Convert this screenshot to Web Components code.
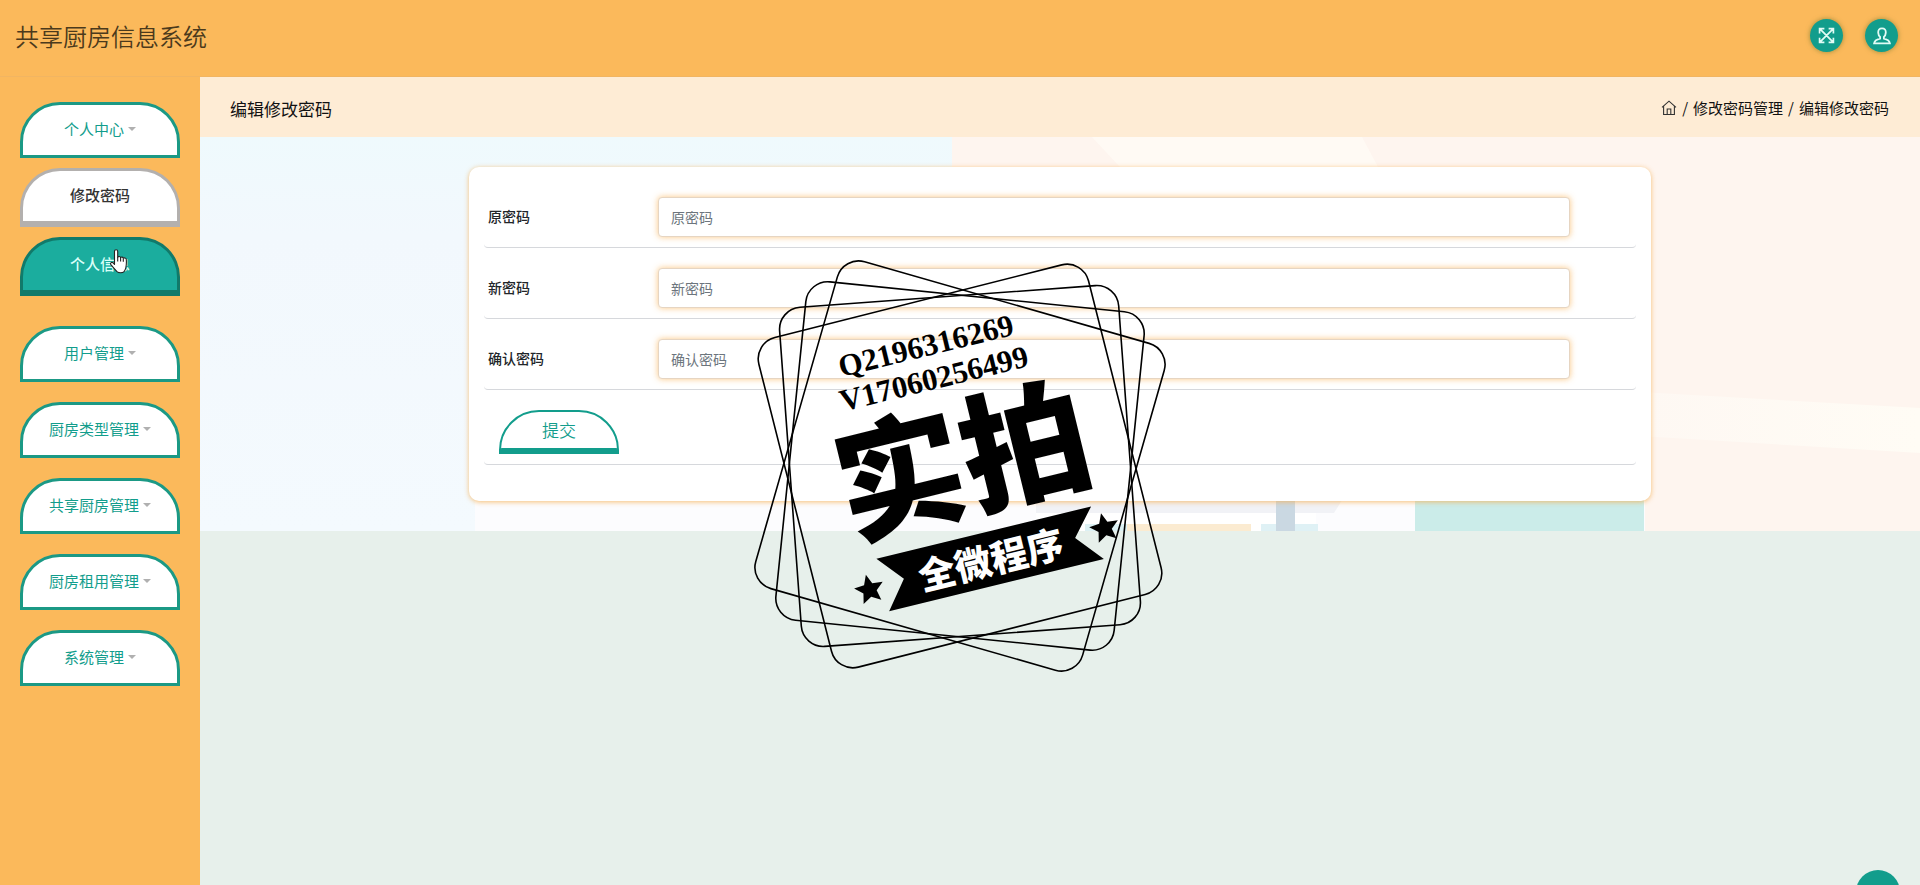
<!DOCTYPE html>
<html lang="zh-CN">
<head>
<meta charset="utf-8">
<title>共享厨房信息系统</title>
<style>
body {
  margin: 0;
  background: #e7f0eb;
  font-family: "Noto Sans CJK SC", "Noto Sans", sans-serif;
  --brand: #fbb95b;
  --teal: #129d8c;
}
</style>
</head>
<body>

<kitchen-app>
  <app-header slot="header" name="共享厨房信息系统">
    <round-button label="全屏">
      <svg viewBox="0 0 16 16" width="17" height="17" fill="none" stroke="#e2fbf5" stroke-width="1.600">
        <path d="M2 2 14 14M14 2 2 14M1.500 6V1.500H6M10 1.500h4.500V6M14.500 10v4.500H10M6 14.500H1.500V10"/>
      </svg>
    </round-button>
    <round-button label="用户">
      <svg viewBox="0 0 18 18" width="18" height="18" fill="none" stroke="#e2fbf5" stroke-width="1.800">
        <path d="M9 1.300C6.300 1.300 5 3 5.200 5.600c.1 1.900.8 3.300 1.900 4.300v1.700c-2.500.6-5.600 1.600-6 4.700h15.800c-.4-3.100-3.500-4.100-6-4.700V9.900c1.100-1 1.800-2.400 1.900-4.300C13 3 11.700 1.300 9 1.300z"/>
      </svg>
    </round-button>
  </app-header>

  <side-nav slot="nav">
    <nav-group label="个人中心" open>
      <nav-link>修改密码</nav-link>
      <nav-link active>个人信息</nav-link>
    </nav-group>
    <nav-group label="用户管理"></nav-group>
    <nav-group label="厨房类型管理"></nav-group>
    <nav-group label="共享厨房管理"></nav-group>
    <nav-group label="厨房租用管理"></nav-group>
    <nav-group label="系统管理"></nav-group>
  </side-nav>

  <page-heading label="编辑修改密码" parent="修改密码管理"></page-heading>

  <page-scene>
    <password-form>
      <form-field label="原密码"></form-field>
      <form-field label="新密码"></form-field>
      <form-field label="确认密码"></form-field>
    </password-form>
  </page-scene>
</kitchen-app>

<shop-stamp></shop-stamp>
<back-top></back-top>

<script>
/**
 * Creates a template element from a string.
 */
const html = (markup) => {
  const template = document.createElement('template')
  template.innerHTML = markup
  return template
}

/**
 * Base class that clones a template into an open shadow root.
 */
class ShadowElement extends HTMLElement {
  constructor () {
    super()
    this.attachShadow({ mode: 'open' })
      .appendChild(this.constructor.template.content.cloneNode(true))
  }

  /**
   * Writes an attribute's value into an element of the shadow root.
   */
  fill (selector, attribute) {
    this.shadowRoot.querySelector(selector).textContent = this.getAttribute(attribute)
  }
}

customElements.define('kitchen-app',
  class extends ShadowElement {
    static template = html(`
<style>
:host {
  display: grid;
  grid-template-columns: 200px 1fr;
  grid-template-rows: auto 1fr;
  min-height: 100vh;
}
header {
  grid-column: 1 / -1;
}
</style>
<header><slot name="header"></slot></header>
<slot name="nav"></slot>
<main><slot></slot></main>
`)
  }
)

customElements.define('app-header',
  class extends ShadowElement {
    static template = html(`
<style>
:host {
  display: flex;
  align-items: center;
  justify-content: space-between;
  box-sizing: border-box;
  height: 77px;
  padding: 0 22px 5px 15px;
  background: var(--brand);
  border-bottom: 1px solid #f1b562;
}
h1 {
  margin: 0;
  font-size: 24px;
  font-weight: 350;
  line-height: 36px;
  color: #4b3a1c;
}
div {
  display: flex;
  gap: 22px;
}
</style>
<h1></h1>
<div><slot></slot></div>
`)

    connectedCallback () {
      this.fill('h1', 'name')
    }
  }
)

customElements.define('round-button',
  class extends ShadowElement {
    static template = html(`
<style>
:host {
  display: block;
}
button {
  display: flex;
  align-items: center;
  justify-content: center;
  width: 33px;
  height: 33px;
  padding: 0;
  border: none;
  border-radius: 50%;
  background: var(--teal);
  box-shadow: 0 0 5px rgba(90, 110, 40, .6);
  cursor: pointer;
}
</style>
<button type="button"><slot></slot></button>
`)

    connectedCallback () {
      this.shadowRoot.querySelector('button').setAttribute('aria-label', this.getAttribute('label'))
    }
  }
)

customElements.define('side-nav',
  class extends ShadowElement {
    static template = html(`
<style>
:host {
  display: block;
  background: var(--brand);
}
nav {
  display: flex;
  flex-direction: column;
  gap: 20px;
  padding: 25px 20px;
}
</style>
<nav><slot></slot></nav>
`)
  }
)

customElements.define('nav-group',
  class extends ShadowElement {
    static template = html(`
<style>
:host {
  display: block;
}
button {
  display: flex;
  align-items: center;
  justify-content: center;
  gap: 4px;
  box-sizing: border-box;
  width: 100%;
  height: 56px;
  padding: 0 0 2px;
  border: 3px solid #1b9985;
  border-radius: 40px 40px 0 0;
  background: #fff;
  color: var(--teal);
  font: 15px/22px "Noto Sans CJK SC", sans-serif;
  cursor: pointer;
}
i {
  border: 4px solid transparent;
  border-top-color: #b0b0b0;
  border-bottom: none;
}
div {
  display: none;
}
:host([open]) div {
  display: grid;
  gap: 10px;
  padding: 10px 0;
}
</style>
<button type="button"><span></span><i></i></button>
<div><slot></slot></div>
`)

    connectedCallback () {
      this.fill('span', 'label')
      this.shadowRoot.querySelector('button').addEventListener('click', () => {
        this.toggleAttribute('open')
      })
    }
  }
)

customElements.define('nav-link',
  class extends ShadowElement {
    static template = html(`
<style>
:host {
  display: block;
  position: relative;
}
a {
  display: flex;
  align-items: center;
  justify-content: center;
  box-sizing: border-box;
  height: 59px;
  padding-bottom: 2px;
  border: 3px solid #b3b0ae;
  border-bottom-width: 6px;
  border-radius: 40px 40px 0 0;
  background: #fff;
  color: #333;
  font-size: 15px;
  font-weight: 500;
  line-height: 22px;
  text-decoration: none;
}
:host([active]) a {
  border-color: #117a6a;
  background: #1bad9e;
  color: #d9fff8;
}
svg {
  display: none;
}
:host([active]) svg {
  display: block;
  position: absolute;
  left: 90px;
  top: 12px;
}
</style>
<a href="#"><slot></slot></a>
<svg width="18" height="25" viewBox="0 0 18 25" fill="#fff" stroke="#222" stroke-width="1.100" stroke-linejoin="round">
  <path d="M4.500 15.500V2.500c0-2.400 3.200-2.400 3.200 0v5.800c.6-1.300 2.700-1.100 2.900.4.700-1 2.600-.8 2.700.6.900-.8 2.900-.6 3 1.200.3 4.600.4 9-2.300 12.100-1.500 1.500-5.300 1.400-7 0C5 20.600 2.600 17.700.9 15.600c-1-1.700.8-3 2.200-1.700z"/>
  <path d="M7.700 8v4.500M10.600 8.800v3.700M13.300 9.500v3.300" fill="none"/>
</svg>
`)
  }
)

customElements.define('page-heading',
  class extends ShadowElement {
    static template = html(`
<style>
:host {
  display: flex;
  align-items: center;
  justify-content: space-between;
  height: 60px;
  padding: 0 31px 0 30px;
  background: #feecd5;
  color: #111;
}
h2 {
  margin: 0;
  padding-top: 4px;
  font-size: 17px;
  font-weight: 400;
  line-height: 24px;
}
nav {
  display: flex;
  align-items: center;
  gap: 5px;
  padding-top: 2px;
  font-size: 15px;
  line-height: 22px;
}
a {
  display: flex;
  color: inherit;
  text-decoration: none;
}
</style>
<h2></h2>
<nav>
  <a href="#" aria-label="首页">
    <svg width="16" height="16" viewBox="0 0 16 16" fill="none" stroke="#333" stroke-width="1.100">
      <path d="M1 7.300 8 1.200l7 6.100M2.600 6.200v8.300h10.800V6.200M6.200 14.500V9h3.600v5.500"/>
    </svg>
  </a>
  <span>/</span>
  <a href="#" class="parent"></a>
  <span>/</span>
  <span class="current"></span>
</nav>
`)

    connectedCallback () {
      this.fill('h2', 'label')
      this.fill('.parent', 'parent')
      this.fill('.current', 'label')
    }
  }
)

customElements.define('page-scene',
  class extends ShadowElement {
    static template = html(`
<style>
:host {
  display: block;
  position: relative;
  padding: 30px;
}
svg {
  position: absolute;
  inset: 0;
  width: 100%;
  height: 100%;
}
div {
  position: relative;
}
</style>
<svg viewBox="0 0 1720 394" preserveAspectRatio="none" aria-hidden="true">
  <defs>
    <linearGradient id="sky" x1="0" y1="0" x2="0" y2="1">
      <stop offset="0" stop-color="#effafd"/>
      <stop offset=".25" stop-color="#f2f8fd"/>
      <stop offset="1" stop-color="#f4fafe"/>
    </linearGradient>
    <linearGradient id="beam">
      <stop offset="0" stop-color="#fef8f3"/>
      <stop offset="1" stop-color="#fffcf5"/>
    </linearGradient>
  </defs>
  <rect width="752" height="394" fill="url(#sky)"/>
  <rect x="752" width="968" height="394" fill="#fef5ef"/>
  <path d="M892 0h270l16 30H920z" fill="#fffaf4"/>
  <path d="M1440 255 1720 271v45l-280-17z" fill="url(#beam)"/>
  <rect x="275" y="350" width="1170" height="44" fill="#fcfcfe"/>
  <path d="M836 360h308l-10 16H836z" fill="#f1f2f6"/>
  <rect x="836" y="376" width="280" height="18" fill="#fff"/>
  <rect x="885" y="387" width="42" height="7" fill="#dcf1f4"/>
  <rect x="927" y="387" width="124" height="7" fill="#fbebd1"/>
  <rect x="1061" y="387" width="57" height="7" fill="#dff1f5"/>
  <rect x="1076" y="360" width="19" height="34" fill="#cad8e2"/>
  <rect x="1215" y="350" width="229" height="44" fill="#cbece9"/>
</svg>
<div><slot></slot></div>
`)
  }
)

customElements.define('password-form',
  class extends ShadowElement {
    static template = html(`
<style>
:host {
  display: block;
}
form {
  box-sizing: border-box;
  max-width: 1182px;
  margin: 0 auto;
  padding: 10px 15px 36px;
  border-radius: 10px;
  background: #fff;
  box-shadow: 0 1px 5px rgba(245, 175, 80, .8);
}
div {
  padding: 20px 15px 10px;
  border-bottom: 1px solid #d6d8dc;
  border-radius: 4px;
}
button {
  display: block;
  width: 120px;
  height: 44px;
  padding: 0 0 4px;
  border: 2px solid var(--teal);
  border-radius: 40px 40px 0 0;
  background: #fff;
  box-shadow: inset 0 -4px var(--teal);
  color: var(--teal);
  font: 17px/24px "Noto Sans CJK SC", sans-serif;
  font-weight: 350;
  cursor: pointer;
}
</style>
<form>
  <slot></slot>
  <div><button type="submit">提交</button></div>
</form>
`)

    connectedCallback () {
      this.shadowRoot.querySelector('form').addEventListener('submit', (event) => {
        event.preventDefault()
      })
    }
  }
)

customElements.define('form-field',
  class extends ShadowElement {
    static template = html(`
<style>
:host {
  display: grid;
  grid-template-columns: 170px 1fr;
  align-items: center;
  padding: 20px 66px 10px 4px;
  border-bottom: 1px solid #d6d8dc;
  border-radius: 4px;
}
label {
  padding-bottom: 2px;
  font-size: 14px;
  font-weight: 500;
  line-height: 20px;
  color: #212529;
}
input {
  box-sizing: border-box;
  width: 100%;
  height: 40px;
  padding: 0 12px;
  border: 1px solid #e6d5c2;
  border-radius: 4px;
  background: #fff;
  box-shadow: 0 0 6px rgba(250, 185, 100, .8);
  font: 14px/20px "Noto Sans CJK SC", sans-serif;
}
input::placeholder {
  color: #6c757d;
}
</style>
<label for="value"></label>
<input type="password" id="value">
`)

    connectedCallback () {
      this.fill('label', 'label')
      this.shadowRoot.querySelector('input').placeholder = this.getAttribute('label')
    }
  }
)

customElements.define('shop-stamp',
  class extends ShadowElement {
    static template = html(`
<style>
:host {
  position: absolute;
  top: 240px;
  left: calc(50% - 220px);
  pointer-events: none;
}
svg {
  display: block;
}
.contact {
  font: bold 31px "Liberation Serif", serif;
}
.big {
  font: 900 128px "Noto Sans CJK SC", sans-serif;
}
.ribbon {
  font: 900 37px "Noto Sans CJK SC", sans-serif;
  fill: #fff;
}
</style>
<svg width="440" height="440" viewBox="0 0 440 440">
  <g transform="translate(220 226)" fill="none" stroke="#000" stroke-width="1.600">
    <rect x="-170" y="-170" width="340" height="340" rx="22" transform="rotate(16)"/>
    <rect x="-170" y="-170" width="340" height="340" rx="22" transform="rotate(5.800)"/>
    <rect x="-170" y="-170" width="340" height="340" rx="22" transform="rotate(-4.200)"/>
    <rect x="-170" y="-170" width="340" height="340" rx="22" transform="rotate(-14.200)"/>
  </g>
  <g transform="rotate(-13.700)">
    <text class="contact" x="66" y="157">Q2196316269</text>
    <text class="contact" x="59" y="191">V17060256499</text>
    <text class="big" x="36" y="315">实拍</text>
    <path d="M57 342H278L255 369 278 396H57L79 368z"/>
    <text class="ribbon" x="94" y="384">全微程序</text>
    <path id="star" d="M43 355l4.200 9.700 10.500 1-7.900 7 2.300 10.300-9.100-5.400-9.100 5.400 2.300-10.300-7.900-7 10.500-1z"/>
    <use href="#star" x="243" y="-4"/>
  </g>
</svg>
`)
  }
)

customElements.define('back-top',
  class extends ShadowElement {
    static template = html(`
<style>
:host {
  position: fixed;
  right: 20px;
  bottom: -29px;
}
button {
  display: block;
  width: 44px;
  height: 44px;
  border: none;
  border-radius: 50%;
  background: var(--teal);
}
</style>
<button type="button" aria-label="返回顶部"></button>
`)

    connectedCallback () {
      this.addEventListener('click', () => window.scrollTo(0, 0))
    }
  }
)
</script>
</body>
</html>
